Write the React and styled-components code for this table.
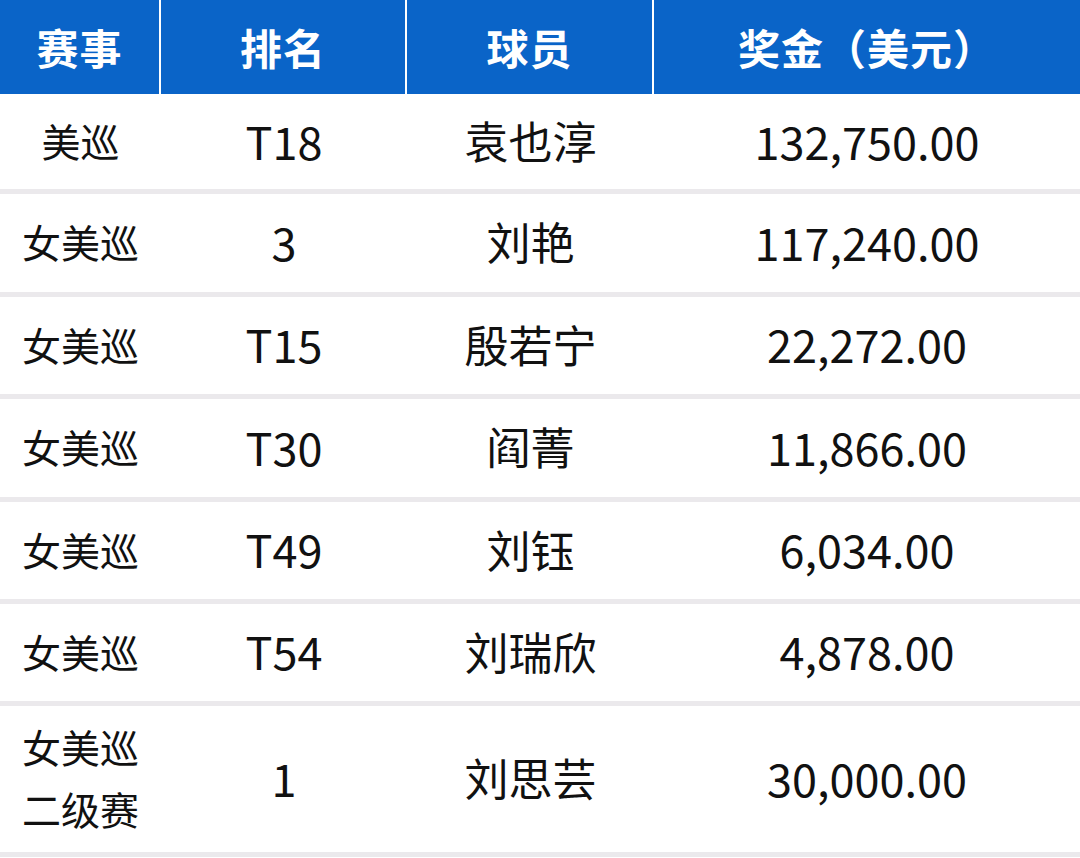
import React from "react"
import styled, { createGlobalStyle } from "styled-components"

const rows = [
  { event: ["美巡"], rank: "T18", player: "袁也淳", prize: "132,750.00", height: 94 },
  { event: ["女美巡"], rank: "3", player: "刘艳", prize: "117,240.00", height: 98 },
  { event: ["女美巡"], rank: "T15", player: "殷若宁", prize: "22,272.00", height: 97 },
  { event: ["女美巡"], rank: "T30", player: "阎菁", prize: "11,866.00", height: 98 },
  { event: ["女美巡"], rank: "T49", player: "刘钰", prize: "6,034.00", height: 97 },
  { event: ["女美巡"], rank: "T54", player: "刘瑞欣", prize: "4,878.00", height: 97 },
  { event: ["女美巡", "二级赛"], rank: "1", player: "刘思芸", prize: "30,000.00", height: 146 },
]

const App = () => {
  return (
    <>
      <GlobalStyle />
      <Table>
        <HeaderRow>
          <HeadCell>赛事</HeadCell>
          <HeadCell>排名</HeadCell>
          <HeadCell>球员</HeadCell>
          <HeadCell $last>奖金（美元）</HeadCell>
        </HeaderRow>
        {rows.map((row) => (
          <BodyRow key={row.player} $height={row.height}>
            <Cell $size={39}>
              <EventLines>
                {row.event.map((line) => (
                  <span key={line}>{line}</span>
                ))}
              </EventLines>
            </Cell>
            <Cell $size={45}>{row.rank}</Cell>
            <Cell $size={44}>{row.player}</Cell>
            <Cell $size={45}>{row.prize}</Cell>
          </BodyRow>
        ))}
      </Table>
    </>
  )
}

const GlobalStyle = createGlobalStyle`
  body {
    margin: 0;
    background: #ffffff;
    font-family: "Noto Sans CJK SC", "Noto Sans", sans-serif;
  }
`

const Table = styled.div`
  width: 1080px;
  display: flex;
  flex-direction: column;
  background: #ffffff;
`

const Columns = styled.div`
  display: grid;
  grid-template-columns: 161px 246px 247px 1fr;
`

const HeaderRow = styled(Columns)`
  height: 95px;
`

const HeadCell = styled.div`
  display: flex;
  align-items: center;
  justify-content: center;
  height: 94px;
  padding-bottom: 2px;
  box-sizing: border-box;
  background: #0a64c8;
  border-right: ${(p) => (p.$last ? "0" : "2px solid #ffffff")};
  color: #ffffff;
  font-size: 42px;
  font-weight: 700;
  letter-spacing: 1px;
`

const BodyRow = styled(Columns)`
  height: ${(p) => p.$height}px;
  border-bottom: 5px solid #ebe9ec;
`

const Cell = styled.div`
  display: flex;
  align-items: center;
  justify-content: center;
  padding-bottom: 4px;
  color: #111111;
  font-size: ${(p) => p.$size}px;
  font-weight: 400;
`

const EventLines = styled.div`
  display: flex;
  flex-direction: column;
  align-items: flex-start;
  line-height: 62px;
`

export default App
